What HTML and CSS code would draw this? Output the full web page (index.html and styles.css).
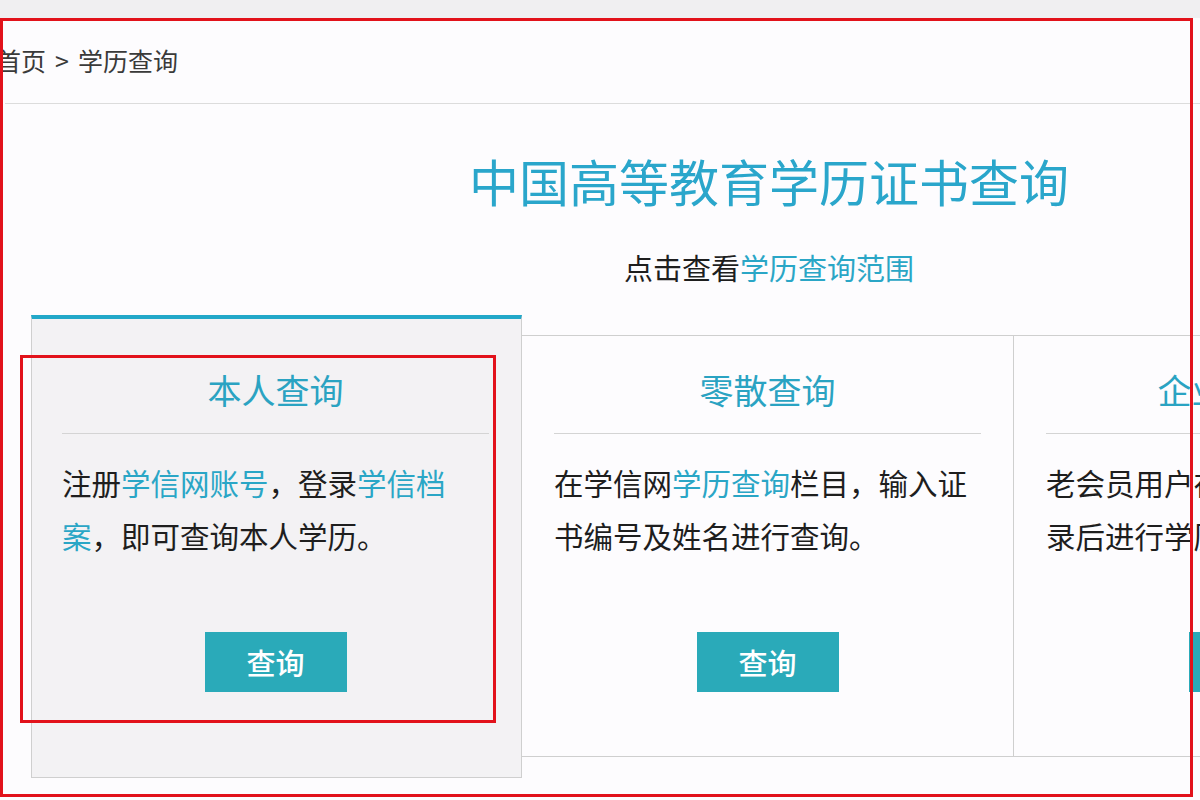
FILE: index.html
```html
<!DOCTYPE html>
<html lang="zh-CN">
<head>
<meta charset="utf-8">
<title>学历查询</title>
<link rel="stylesheet" href="styles.css">
</head>
<body>
<div class="strip"></div>
<div class="page">
  <div class="crumbbar">
    <div class="crumb"><span>首页</span><span class="sep">&gt;</span><span>学历查询</span></div>
  </div>
  <div class="main">
    <h1 class="title">中国高等教育学历证书查询</h1>
    <p class="sub">点击查看<a class="link">学历查询范围</a></p>
    <div class="tabs">
      <div class="card active">
        <h2 class="card-title">本人查询</h2>
        <p class="card-text">注册<a class="link">学信网账号</a>，登录<a class="link">学信档<br>案</a>，即可查询本人学历。</p>
        <a class="btn">查询</a>
      </div>
      <div class="card">
        <h2 class="card-title">零散查询</h2>
        <p class="card-text">在学信网<a class="link">学历查询</a>栏目，输入证书编号及姓名进行查询。</p>
        <a class="btn">查询</a>
      </div>
      <div class="card">
        <h2 class="card-title">企业用户查询</h2>
        <p class="card-text">老会员用户在企业用户中心登<br>录后进行学历查询。</p>
        <a class="btn">查询</a>
      </div>
    </div>
  </div>
</div>
<div class="frame"></div>
<div class="mark"></div>
</body>
</html>
```

FILE: styles.css
```css
html, body {
  margin: 0;
  padding: 0;
  width: 1200px;
  height: 800px;
  overflow: hidden;
}
body {
  position: relative;
  background: #fdfcfe;
  font-family: "Noto Sans CJK SC", "Noto Sans", sans-serif;
  color: #222;
}
.strip {
  height: 18px;
  background: #f0eff1;
}
.crumbbar {
  margin-left: 5px;
  height: 85px;
  border-bottom: 1px solid #dcdcdc;
}
.crumb {
  margin-left: -9px;
  font-size: 25px;
  line-height: 85px;
  color: #3a3a3a;
  display: flex;
  white-space: nowrap;
}
.crumb .sep {
  margin: 0 9px;
}
.main {
  margin-left: 31px;
  width: 1476px;
}
.title {
  margin: 41px 0 0;
  font-size: 50px;
  line-height: 70px;
  font-weight: normal;
  text-align: center;
  color: #2aa6cb;
}
.sub {
  margin: 32px 0 0;
  font-size: 29px;
  line-height: 40px;
  text-align: center;
  color: #1e1e1e;
}
.link {
  color: #2aa6c6;
}
.tabs {
  margin-top: 48px;
  display: flex;
  align-items: stretch;
}
.card {
  width: 492px;
  box-sizing: border-box;
  padding: 29px 32px 64px;
  border-top: 1px solid #cfcfcf;
  border-right: 1px solid #cfcfcf;
  border-bottom: 1px solid #cfcfcf;
  display: flex;
  flex-direction: column;
  align-items: stretch;
}
.card.active {
  width: 491px;
  margin: -20px 0 -21px;
  padding: 46px 32px 85px 30px;
  border-top: 4px solid #22a8c9;
  border-left: 1px solid #cfcfcf;
  background: #f3f2f4;
}
.card-title {
  margin: 0;
  padding-bottom: 18px;
  border-bottom: 1px solid #d4d4d4;
  font-size: 34px;
  line-height: 50px;
  font-weight: normal;
  text-align: center;
  color: #2aa3c2;
  white-space: nowrap;
}
.card-text {
  margin: 22px 0 0;
  height: 106px;
  font-size: 29.5px;
  line-height: 53px;
  color: #1e1e1e;
}
.btn {
  align-self: center;
  margin-top: 70px;
  width: 142px;
  height: 60px;
  background: #2aaab9;
  color: #fff;
  font-size: 29px;
  font-weight: 500;
  line-height: 60px;
  text-align: center;
}
.frame {
  position: absolute;
  left: 0;
  top: 18px;
  width: 1193px;
  height: 779px;
  box-sizing: border-box;
  border: 3px solid #e2121b;
  pointer-events: none;
}
.mark {
  position: absolute;
  left: 20px;
  top: 355px;
  width: 476px;
  height: 368px;
  box-sizing: border-box;
  border: 3px solid #e2121b;
  pointer-events: none;
}
```
